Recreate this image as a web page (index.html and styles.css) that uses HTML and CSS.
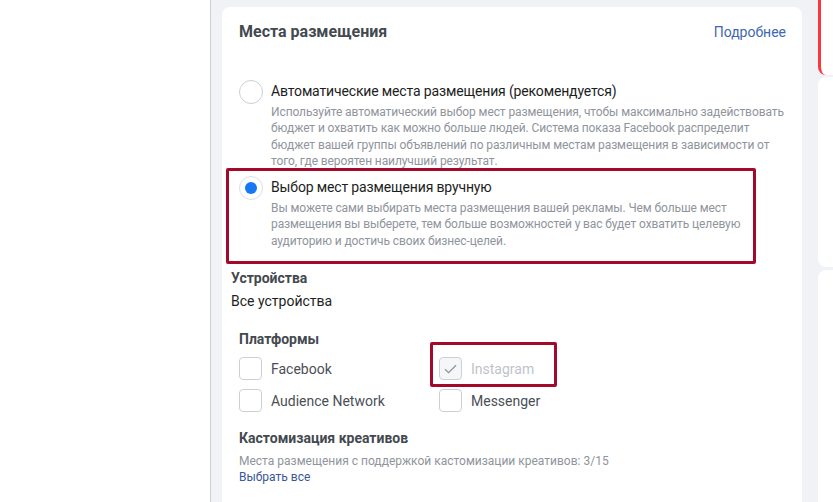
FILE: index.html
```html
<!DOCTYPE html>
<html lang="ru">
<head>
  <meta charset="UTF-8">
  <meta name="viewport" content="width=device-width, initial-scale=1.0">
  <title>Места размещения</title>
  <link rel="stylesheet" href="styles.css">
</head>
<body>
  <div class="sidebar"></div>

  <div class="main">
    <div class="card">
      <div class="card-head">
        <h2>Места размещения</h2>
        <a href="#" class="link">Подробнее</a>
      </div>

      <div class="options">
        <div class="option">
          <span class="radio"></span>
          <div class="option-text">
            <div class="option-label">Автоматические места размещения (рекомендуется)</div>
            <div class="option-desc">Используйте автоматический выбор мест размещения, чтобы максимально задействовать бюджет и охватить как можно больше людей. Система показа Facebook распределит бюджет вашей группы объявлений по различным местам размещения в зависимости от того, где вероятен наилучший результат.</div>
          </div>
        </div>

        <div class="option option-manual">
          <span class="radio radio-on"></span>
          <div class="option-text">
            <div class="option-label">Выбор мест размещения вручную</div>
            <div class="option-desc">Вы можете сами выбирать места размещения вашей рекламы. Чем больше мест размещения вы выберете, тем больше возможностей у вас будет охватить целевую аудиторию и достичь своих бизнес-целей.</div>
          </div>
          <span class="mark mark-manual"></span>
        </div>
      </div>

      <div class="devices">
        <h3>Устройства</h3>
        <div class="devices-value">Все устройства</div>
      </div>

      <h3 class="section-title">Платформы</h3>
      <div class="platforms">
        <div class="check">
          <span class="box"></span>
          <span>Facebook</span>
        </div>
        <div class="check check-disabled">
          <span class="box">
            <svg width="13" height="10" viewBox="0 0 13 10"><path d="M1 5.2 L4.6 8.6 L12 1.2" fill="none" stroke="#90949c" stroke-width="1.3"/></svg>
          </span>
          <span>Instagram</span>
          <span class="mark mark-insta"></span>
        </div>
        <div class="check">
          <span class="box"></span>
          <span>Audience Network</span>
        </div>
        <div class="check">
          <span class="box"></span>
          <span>Messenger</span>
        </div>
      </div>

      <h3 class="section-title section-custom">Кастомизация креативов</h3>
      <div class="small-desc">Места размещения с поддержкой кастомизации креативов: 3/15</div>
      <a href="#" class="small-link">Выбрать все</a>
    </div>

    <div class="side">
      <div class="side-card side-alert"></div>
      <div class="side-card side-mid"></div>
      <div class="side-card side-low"></div>
    </div>
  </div>
</body>
</html>
```

FILE: styles.css
```css
/* Global Styles */
* {
  margin: 0;
  padding: 0;
  box-sizing: border-box;
}

body {
  display: flex;
  height: 502px;
  overflow: hidden;
  background: #f0f2f5;
  font-family: Roboto, 'Liberation Sans', Arial, sans-serif;
  color: #1c1e21;
}

.sidebar {
  width: 211px;
  flex-shrink: 0;
  background: #ffffff;
  border-right: 1px solid #ccd0d5;
}

.main {
  display: flex;
  gap: 16px;
  padding: 7px 0 0 11px;
  flex: 1;
}

.card {
  width: 580px;
  flex-shrink: 0;
  background: #ffffff;
  border-radius: 8px 8px 0 0;
  padding: 15px 16px 0 17px;
}

.card-head {
  display: flex;
  justify-content: space-between;
  align-items: baseline;
}

h2 {
  font-size: 16px;
  line-height: 20px;
  font-weight: bold;
  color: #444950;
}

.link {
  font-size: 14px;
  color: #4267b2;
  text-decoration: none;
}

.options {
  margin-top: 38px;
}

.option {
  position: relative;
  display: flex;
  gap: 8px;
}

.option-manual {
  margin-top: 7px;
}

.radio {
  width: 24px;
  height: 24px;
  flex-shrink: 0;
  border: 1px solid #ccd0d5;
  border-radius: 50%;
  display: flex;
  align-items: center;
  justify-content: center;
}

.radio-on {
  border-color: #dddfe2;
}

.radio-on::after {
  content: "";
  width: 12px;
  height: 12px;
  border-radius: 50%;
  background: #1877f2;
}

.option-text {
  flex: 1;
  margin-right: -8px;
}

.option-label {
  font-size: 14px;
  line-height: 22px;
  letter-spacing: -0.15px;
  color: #1c1e21;
}

.option-desc {
  margin-top: 2px;
  font-size: 12px;
  line-height: 16.3px;
  letter-spacing: -0.1px;
  color: #90949c;
}

/* annotation frames */
.mark {
  position: absolute;
  border: 3px solid #a3092b;
  border-radius: 2px;
  pointer-events: none;
}

.mark-manual {
  left: -13px;
  top: -8px;
  width: 530px;
  height: 96px;
}

.mark-insta {
  left: -9px;
  top: -15px;
  width: 127px;
  height: 45px;
}

.devices {
  margin: 19px 0 0 -8px;
}

h3 {
  font-size: 14px;
  line-height: 20px;
  font-weight: bold;
  color: #444950;
}

.devices-value {
  margin-top: 3px;
  font-size: 14px;
  line-height: 20px;
  color: #1c1e21;
}

.section-title {
  margin-top: 18px;
}

.platforms {
  margin-top: 8px;
  display: grid;
  grid-template-columns: 200px 200px;
  row-gap: 9px;
}

.check {
  position: relative;
  display: flex;
  align-items: center;
  gap: 9px;
  height: 23px;
  font-size: 14px;
  color: #4b4f56;
}

.box {
  width: 23px;
  height: 23px;
  border: 1px solid #ccd0d5;
  border-radius: 4px;
  display: flex;
  align-items: center;
  justify-content: center;
}

.check-disabled {
  color: #bec3c9;
}

.check-disabled .box {
  background: #f5f6f7;
}

.section-custom {
  margin-top: 16px;
}

.small-desc {
  margin-top: 5px;
  font-size: 12px;
  line-height: 16px;
  color: #90949c;
}

.small-link {
  display: block;
  font-size: 12px;
  line-height: 17px;
  color: #385898;
  text-decoration: none;
}

.side {
  flex: 1;
  display: flex;
  flex-direction: column;
  margin-top: -7px;
}

.side-card {
  background: #ffffff;
}

.side-alert {
  height: 75px;
  border-left: 3px solid #fa383e;
  border-radius: 0 0 0 8px;
}

.side-mid {
  height: 190px;
  margin-top: 2px;
  border-radius: 8px 0 0 8px;
}

.side-low {
  flex: 1;
  margin-top: 3px;
  border-radius: 8px 0 0 0;
}
```
